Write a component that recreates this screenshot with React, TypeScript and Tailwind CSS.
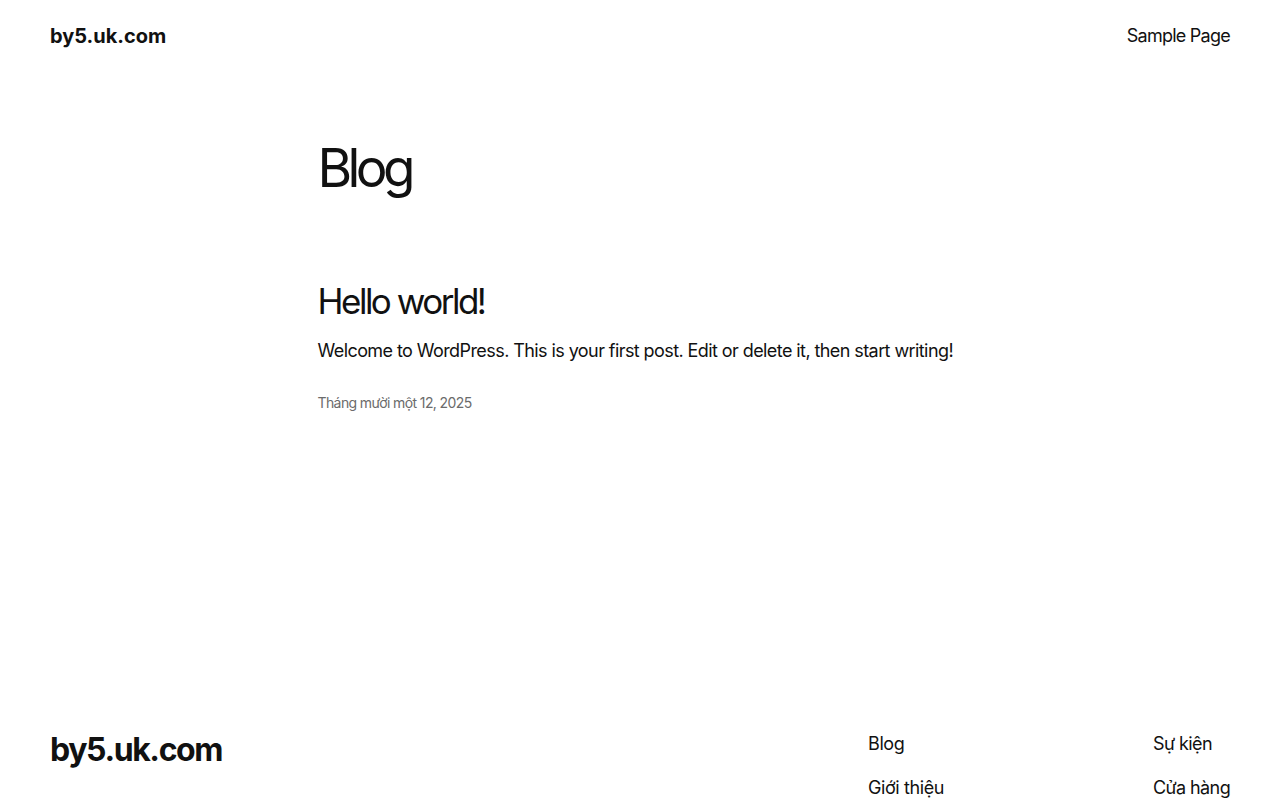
export default function App() {
  const font = { fontFamily: "Inter, 'Noto Sans', sans-serif" };
  return (
    <div className="min-h-screen bg-white pt-px text-[#111111]" style={font}>
      <header className="flex h-[70px] items-center justify-between px-[50px]">
        <a className="text-[20px] font-bold leading-[28px] tracking-[0px]">by5.uk.com</a>
        <nav>
          <a className="text-[18px] leading-[28px] tracking-[-0.75px]">Sample Page</a>
        </nav>
      </header>

      <main className="mx-auto w-[645px]">
        <h1 className="mt-[67px] text-[53px] font-normal leading-[60px] tracking-[-4.6px]">Blog</h1>

        <article className="mt-[81px]">
          <h2 className="text-[35px] font-normal leading-[44px] tracking-[-2.5px]">Hello world!</h2>
          <p className="mt-[14px] whitespace-nowrap text-[18px] leading-[28px] tracking-[-0.58px]">
            Welcome to WordPress. This is your first post. Edit or delete it, then start writing!
          </p>
          <div className="mt-[28px] text-[14px] leading-[20px] tracking-[-0.6px] text-[#6b6b6b]">
            Tháng mười một 12, 2025
          </div>
        </article>
      </main>

      <footer className="mt-[317px] flex items-start justify-between px-[50px]">
        <div className="text-[32px] font-bold leading-[40px] tracking-[-1.4px]">by5.uk.com</div>
        <div className="flex">
          <ul className="flex w-[285px] flex-col gap-[16px] text-[18px] leading-[28px] tracking-[-0.4px]">
            <li>Blog</li>
            <li>Giới thiệu</li>
          </ul>
          <ul className="flex w-[77px] flex-col gap-[16px] text-[18px] leading-[28px] tracking-[-0.6px]">
            <li>Sự kiện</li>
            <li className="whitespace-nowrap">Cửa hàng</li>
          </ul>
        </div>
      </footer>
    </div>
  );
}
